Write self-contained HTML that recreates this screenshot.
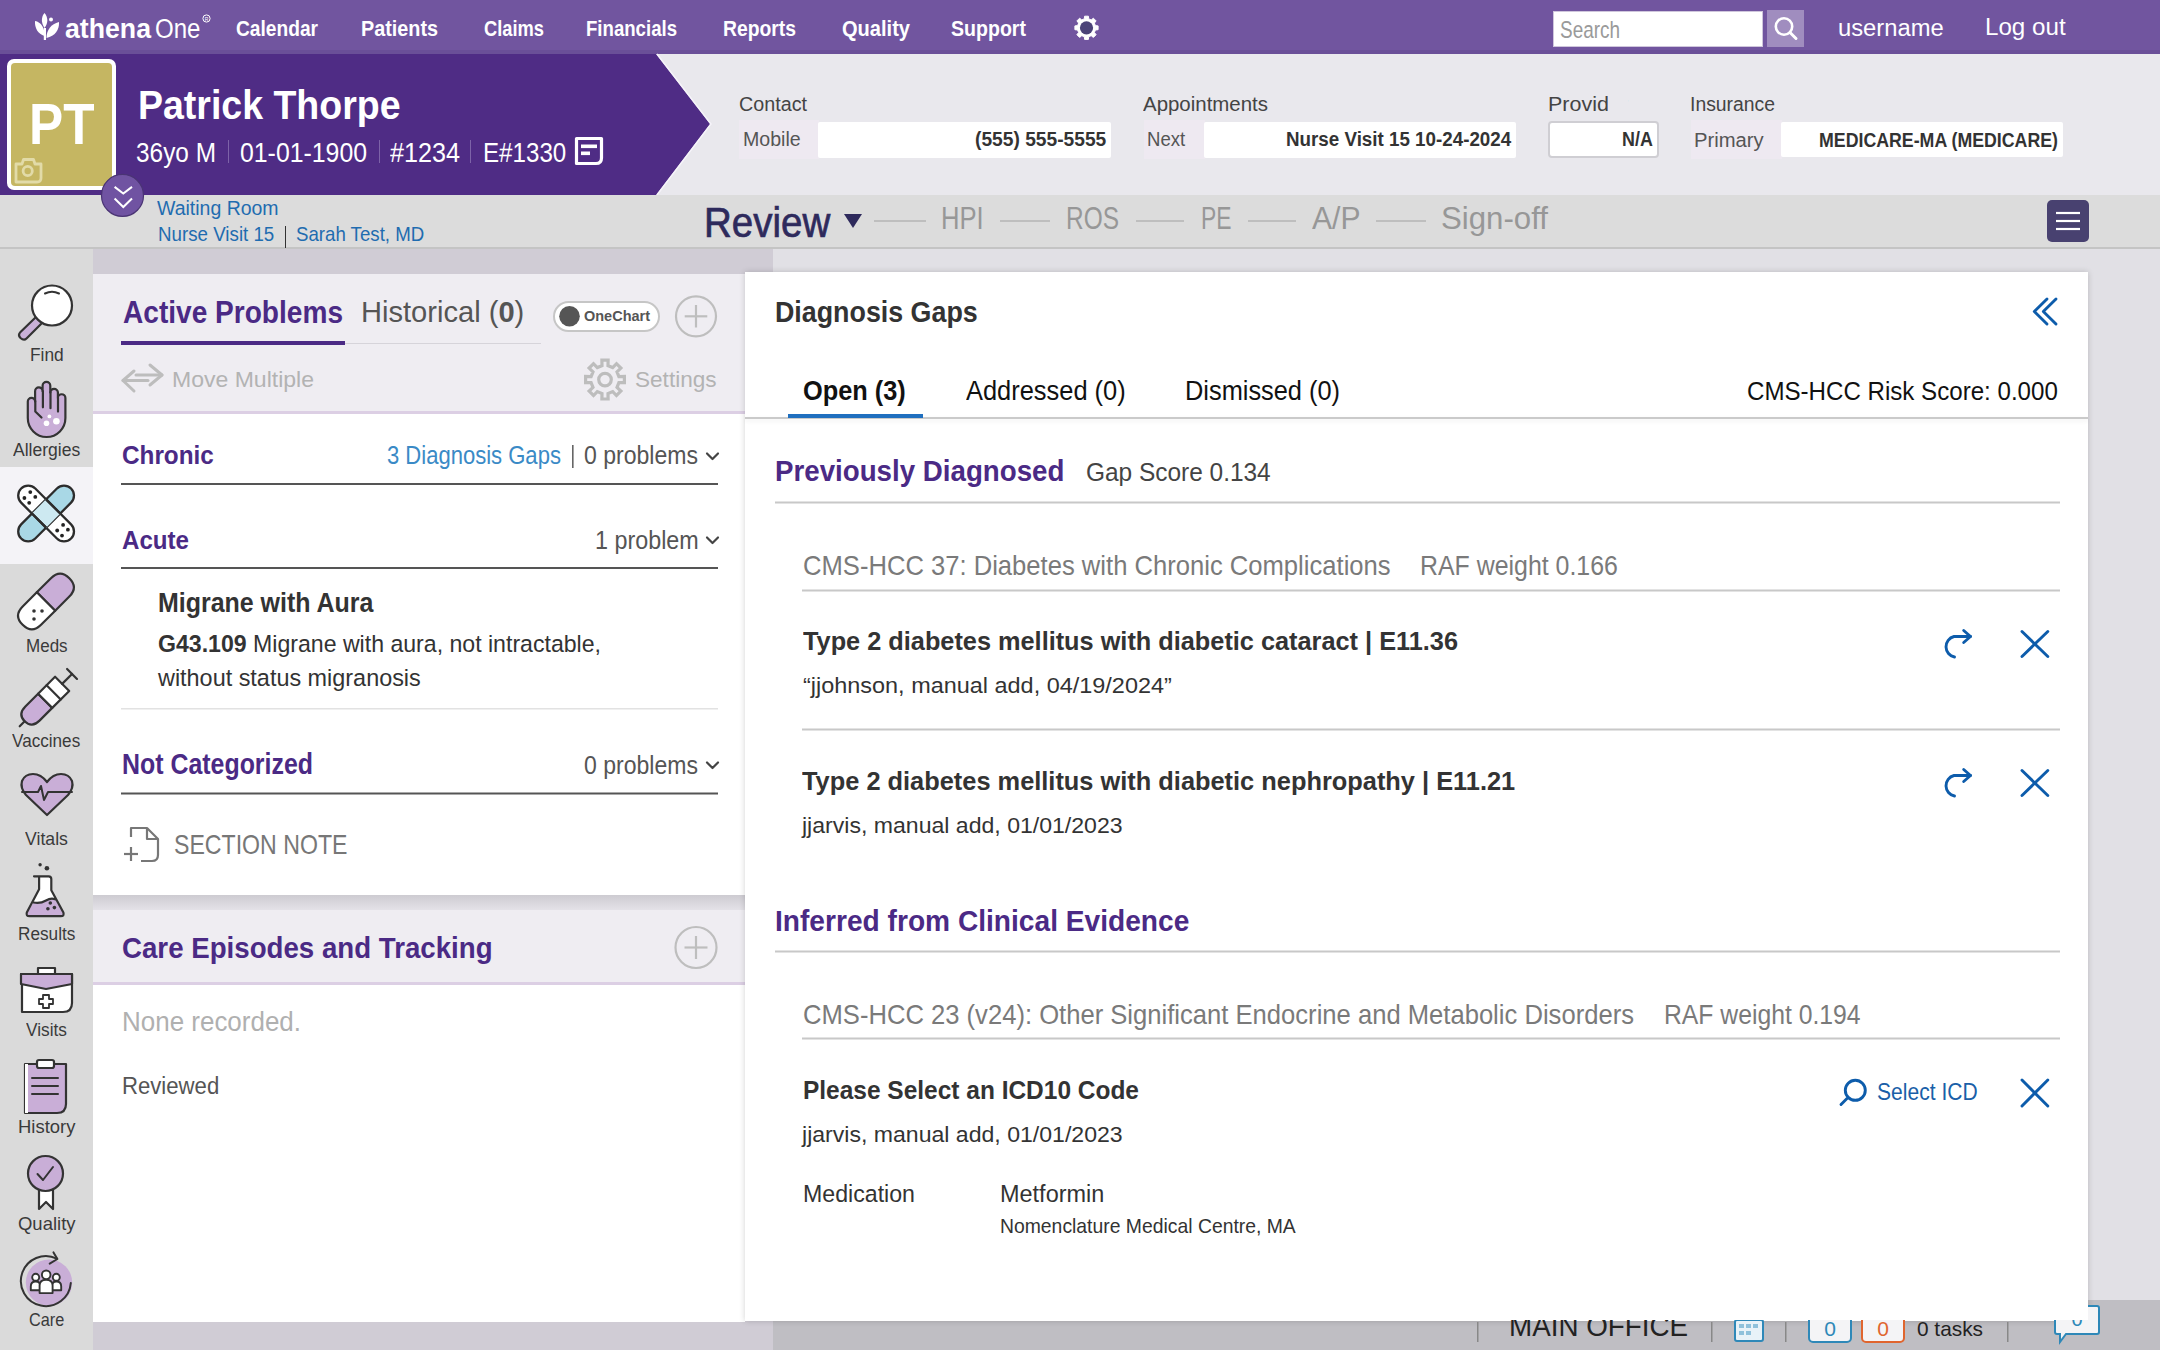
<!DOCTYPE html>
<html><head><meta charset="utf-8"><title>athenaOne</title><style>
*{margin:0;padding:0;box-sizing:border-box}
html,body{width:2160px;height:1350px;overflow:hidden;background:#E0DFE4;font-family:"Liberation Sans",sans-serif;position:relative}
.a{position:absolute}
.t{position:absolute;white-space:nowrap;line-height:1;transform-origin:0 0}
.t b{font-weight:700}
svg{position:absolute;overflow:visible}

</style></head><body>
<!-- backgrounds -->
<div class="a" style="left:0;top:0;width:2160px;height:54px;background:#71559F"></div>
<div class="a" style="left:0;top:50px;width:2160px;height:4px;background:#6A4F98"></div>
<div class="a" style="left:0;top:54px;width:2160px;height:141px;background:#E9E8ED"></div>
<svg style="left:0;top:0" width="2160" height="260"><polygon points="0,54 656,54 710,124 656,195 0,195" fill="#4F2C85"/><polyline points="657,54 711,124 657,195" fill="none" stroke="#F6F4FA" stroke-width="1.4"/></svg>
<div class="a" style="left:0;top:195px;width:2160px;height:54px;background:#DCDCDC;border-bottom:2px solid #C4C4C4"></div>
<div class="a" style="left:0;top:249px;width:93px;height:1101px;background:#DADADA"></div>
<div class="a" style="left:0;top:467px;width:93px;height:97px;background:#F4F3F7"></div>
<div class="a" style="left:93px;top:249px;width:680px;height:1101px;background:#D0CCD5"></div>
<div class="a" style="left:773px;top:249px;width:1387px;height:1051px;background:#E1E0E5"></div>
<div class="a" style="left:773px;top:1300px;width:1387px;height:50px;background:#BFBEC3"></div>

<!-- top nav extras -->
<svg style="left:0;top:0" width="260" height="54">
  <g fill="#fff">
    <path d="M44.5,13 C48,17 48.5,23 44.5,28 C41,23 41,17 44.5,13Z"/>
    <path d="M35,21 C41,22 45,28 44.5,36 C38,34 34.5,28 35,21Z"/>
    <path d="M59,22 C59.5,30 55,36 46.5,38 C46.5,30 51,24 59,22Z"/>
    <rect x="43.8" y="28" width="2.2" height="12"/>
    <circle cx="51" cy="19.5" r="2"/>
  </g>
  <circle cx="206.5" cy="18.5" r="3.6" fill="none" stroke="#fff" stroke-width="1"/>
  <text x="206.5" y="20.6" font-size="5" fill="#fff" text-anchor="middle" font-family="Liberation Sans">R</text>
</svg>
<svg style="left:1066px;top:8px" width="40" height="40">
  <path d="M18.3,10.9 L18.6,8.2 L22.4,8.2 L22.7,10.9 L25.2,11.9 L27.4,10.2 L30.1,12.9 L28.4,15.1 L29.4,17.6 L32.1,17.9 L32.1,21.7 L29.4,22.0 L28.4,24.5 L30.1,26.7 L27.4,29.4 L25.2,27.7 L22.7,28.7 L22.4,31.4 L18.6,31.4 L18.3,28.7 L15.8,27.7 L13.6,29.4 L10.9,26.7 L12.6,24.5 L11.6,22.0 L8.9,21.7 L8.9,17.9 L11.6,17.6 L12.6,15.1 L10.9,12.9 L13.6,10.2 L15.8,11.9Z" fill="#fff" stroke="#fff" stroke-width="1" stroke-linejoin="round"/>
  <circle cx="20.5" cy="19.8" r="6.6" fill="#4B4378"/>
</svg>
<div class="a" style="left:1553px;top:11px;width:210px;height:36px;background:#fff;border:1px solid #cfc6dc"></div>
<div class="a" style="left:1767px;top:10px;width:37px;height:37px;background:#A08DBF"></div>
<svg style="left:1767px;top:10px" width="37" height="37"><circle cx="17" cy="16.5" r="8.2" fill="none" stroke="#fff" stroke-width="2.6"/><line x1="23" y1="22.5" x2="29" y2="28.5" stroke="#fff" stroke-width="3" stroke-linecap="round"/></svg>

<!-- avatar -->
<div class="a" style="left:7px;top:59px;width:109px;height:131px;background:#fff;border-radius:7px"></div>
<div class="a" style="left:11px;top:63px;width:101px;height:123px;background:#C5B662;border-radius:4px"></div>
<svg style="left:0;top:150px" width="60" height="40">
  <path d="M16,14 H22 L23.5,9.5 H33.5 L35,14 H41 V28 Q41,32 37,32 H16 Z" fill="none" stroke="#E2DBA8" stroke-width="2.8" stroke-linejoin="round"/>
  <circle cx="27.7" cy="21" r="4.6" fill="none" stroke="#E2DBA8" stroke-width="2.8"/>
</svg>
<!-- banner separators and doc icon -->
<div class="a" style="left:227.5px;top:140px;width:1.5px;height:23px;background:#7D63A8"></div>
<div class="a" style="left:378.5px;top:140px;width:1.5px;height:23px;background:#7D63A8"></div>
<div class="a" style="left:469.5px;top:140px;width:1.5px;height:23px;background:#7D63A8"></div>
<svg style="left:570px;top:132px" width="40" height="40">
  <path d="M6.5,6.5 H31.5 V26 Q31.5,31.5 26,31.5 H6.5 Z" fill="none" stroke="#fff" stroke-width="3.2" stroke-linejoin="round"/>
  <rect x="11" y="12.5" width="16" height="3.6" fill="#fff"/>
  <rect x="11" y="19.5" width="9" height="3.6" fill="#fff"/>
</svg>
<!-- contact boxes -->
<div class="a" style="left:739px;top:120px;width:80px;height:39px;background:#EEE9F1"></div>
<div class="a" style="left:818px;top:122px;width:293px;height:36px;background:#fff;border-radius:2px"></div>
<div class="a" style="left:1144px;top:120px;width:61px;height:39px;background:#EEE9F1"></div>
<div class="a" style="left:1204px;top:122px;width:312px;height:36px;background:#fff;border-radius:2px"></div>
<div class="a" style="left:1548px;top:120.5px;width:111px;height:37.5px;background:#fff;border:2px solid #CFCED3;border-radius:4px"></div>
<div class="a" style="left:1691px;top:120px;width:91px;height:39px;background:#EEE9F1"></div>
<div class="a" style="left:1781px;top:122px;width:282px;height:35px;background:#fff;border-radius:2px"></div>
<!-- expand circle -->
<svg style="left:95px;top:168px" width="56" height="56">
  <circle cx="27.5" cy="27.4" r="21" fill="#7053A2" stroke="#4A3474" stroke-width="1.2"/>
  <polyline points="19.6,18.9 28.3,25.6 37,18.9" fill="none" stroke="#fff" stroke-width="2"/>
  <polyline points="19.6,30.5 28.3,39 37,30.5" fill="none" stroke="#fff" stroke-width="2"/>
</svg>
<!-- subheader -->
<div class="a" style="left:284.5px;top:226px;width:1.8px;height:22px;background:#333"></div>
<svg style="left:840px;top:205px" width="740" height="32">
  <polygon points="4,9 22,9 13,23" fill="#2E2A5C"/>
  <g stroke="#B4B4B4" stroke-width="1.6">
    <line x1="34" y1="16" x2="86" y2="16"/>
    <line x1="160" y1="16" x2="210" y2="16"/>
    <line x1="296" y1="16" x2="344" y2="16"/>
    <line x1="408" y1="16" x2="456" y2="16"/>
    <line x1="536" y1="16" x2="586" y2="16"/>
  </g>
</svg>
<div class="a" style="left:2047px;top:200px;width:42px;height:42px;background:#484170;border-radius:5px"></div>
<svg style="left:2047px;top:200px" width="42" height="42"><g stroke="#fff" stroke-width="2.2"><line x1="9" y1="13" x2="33" y2="13"/><line x1="9" y1="21" x2="33" y2="21"/><line x1="9" y1="29" x2="33" y2="29"/></g></svg>

<!-- sidebar icons -->
<svg style="left:0;top:0" width="93" height="1350">
  <g stroke="#333" stroke-width="2.2" stroke-linejoin="round" stroke-linecap="round">
    <!-- Find -->
    <path d="M20.5,332 L36,317 L42,323 L26.5,338.5 Q24,341 20.5,338 Q17.5,335 20.5,332Z" fill="#C9B0D8"/>
    <circle cx="52" cy="305.5" r="20" fill="#fff"/>
    <path d="M45,293.5 Q52,290 59,293.5" fill="none" stroke-width="2"/>
    <!-- Allergies (hand) -->
    <path d="M27.8,417 V401.6 A3.65,3.65 0 0 1 35.1,401.6 V391.2 A3.75,3.75 0 0 1 42.6,391.2 V385.8 A3.85,3.85 0 0 1 50.3,385.8 V392.6 A3.8,3.8 0 0 1 57.9,392.6 V398 A3.75,3.75 0 0 1 65.4,398 V418 A18.8,19 0 0 1 27.8,418 Z" fill="#C9AED7"/>
    <path d="M35.3,401 V411.5 L41.5,417.5 M42.9,391 V407.3 M50.5,392 V408.2 M58,398 V411.6" fill="none" stroke-width="2.2"/>
    <g fill="#fff" stroke="none"><circle cx="49.4" cy="416.4" r="1.9"/><circle cx="46.5" cy="423.2" r="2.8"/><circle cx="56.4" cy="421.2" r="3.3"/></g>
    <!-- Meds (pill) -->
    <g transform="translate(46,601.5) rotate(-45)">
      <path d="M0,-13 H20 Q33,-13 33,0 Q33,13 20,13 H0Z" fill="#C9AED7"/>
      <path d="M0,-13 H-20 Q-33,-13 -33,0 Q-33,13 -20,13 H0Z" fill="#fff"/>
    </g>
    <g fill="#333" stroke="none"><circle cx="34" cy="611" r="1.8"/><circle cx="42" cy="611" r="1.8"/><circle cx="34" cy="619" r="1.8"/></g>
    <!-- Vaccines (syringe) -->
    <g transform="translate(48,698) rotate(-45)">
      <path d="M-4,-10 H-22 Q-33,-10 -33,0 Q-33,10 -22,10 H-4Z" fill="#C9AED7"/>
      <rect x="-4" y="-10" width="24" height="20" fill="#fff"/>
      <line x1="8" y1="-10" x2="8" y2="10"/>
      <line x1="20" y1="0" x2="34" y2="0"/>
      <line x1="34" y1="-7" x2="34" y2="7"/>
      <line x1="-33" y1="0" x2="-40" y2="0"/>
    </g>
    <!-- Vitals (heart) -->
    <path d="M47,815 L26,795 Q20,788 22,781 Q25,774 33,774 Q41,774 47,782 Q53,774 61,774 Q69,774 72,781 Q74,788 68,795Z" fill="#C9AED7"/>
    <path d="M22,792 L38,792 L41,786 L44,800 L48,792 L72,792" fill="none" stroke-width="2"/>
    <!-- Results (flask) -->
    <path d="M39.1,876.3 V889.2 L26.8,912.5 Q25.8,916.2 29.5,916.2 H60.8 Q64.5,916.2 63.4,912.5 L51.3,890.3 V879 Q51.3,876.3 48.6,876.3 Z" fill="#fff" stroke="none"/>
    <path d="M33.6,902.5 Q40,904 46,900.5 Q51,897.5 55.2,899.3 L63.4,912.5 Q64.5,916.2 60.8,916.2 H29.5 Q25.8,916.2 26.8,912.5 Z" fill="#C9AED7" stroke="none"/>
    <path d="M33.6,902.5 Q40,904 46,900.5 Q51,897.5 55.2,899.3" fill="none"/>
    <path d="M34,876.3 H48.6 Q51.3,876.3 51.3,879 V890.3 L63.4,912.5 Q64.5,916.2 60.8,916.2 H29.5 Q25.8,916.2 26.8,912.5 L39.1,889.2 V876.3" fill="none"/>
    <g fill="#333" stroke="none"><circle cx="40.1" cy="864.8" r="1.7"/><circle cx="46.9" cy="868.2" r="2.3"/><circle cx="50.3" cy="903" r="1.8"/><circle cx="47.9" cy="908.7" r="1.8"/><circle cx="54.4" cy="907.6" r="1.8"/></g>
    <!-- Visits (kit) -->
    <path d="M38,974 V968 H55 V974" fill="#fff"/>
    <path d="M21,974 H72 V1003 Q72,1012 63,1012 H22 V974Z" fill="#fff"/>
    <path d="M21,974 H72 V984 L46,989 L21,984Z" fill="#C9AED7"/>
    <path d="M43,995 H49 V999 H53 V1004 H49 V1008 H43 V1004 H39 V999 H43Z" fill="#fff" stroke-width="1.8"/>
    <!-- History (clipboard) -->
    <path d="M25,1064 H66 V1104 Q66,1113 57,1113 H25Z" fill="#C9AED7"/>
    <path d="M25,1064 H28 V1113 H25Z" fill="#fff" stroke="none"/>
    <rect x="37" y="1060" width="17" height="8" rx="2" fill="#fff"/>
    <g stroke-width="2"><line x1="32" y1="1078" x2="58" y2="1078"/><line x1="32" y1="1086" x2="58" y2="1086"/><line x1="32" y1="1094" x2="58" y2="1094"/></g>
    <!-- Quality (medal) -->
    <path d="M39,1188 V1209 L46,1202 L53,1209 V1188" fill="#fff"/>
    <circle cx="45.5" cy="1173.5" r="17.5" fill="#C9AED7"/>
    <path d="M37.5,1174 L43,1180 L53,1167" fill="none" stroke-width="2"/>
    <!-- Care -->
    <circle cx="49" cy="1282.6" r="23.2" fill="#C9AED7" stroke="none"/>
    <path d="M70.8,1283 A25,25 0 1 1 56.8,1258.6" fill="none" stroke-width="2"/>
    <path d="M53.5,1252.4 L57.4,1259 L49.7,1263.6" fill="none" stroke-width="2"/>
    <g fill="#fff" stroke-width="1.9">
      <path d="M30.8,1290.3 V1286.5 Q30.8,1281.5 35.7,1281.5 Q40.6,1281.5 40.6,1286.5 V1290.3Z"/><circle cx="35.7" cy="1277.3" r="3.5"/>
      <path d="M51.8,1290.3 V1286.5 Q51.8,1281.5 56.4,1281.5 Q61.2,1281.5 61.2,1286.5 V1290.3Z"/><circle cx="56.3" cy="1277.3" r="3.5"/>
      <path d="M39.6,1293.1 V1285.5 Q39.6,1279.7 46.1,1279.7 Q52.6,1279.7 52.6,1285.5 V1293.1Z"/><circle cx="46.2" cy="1274.8" r="4.3"/>
    </g>
  </g>
  <!-- Bandage active -->
  <g stroke="#2c2c2c" stroke-width="2.3" stroke-linejoin="round">
    <g transform="translate(46.1,513.5) rotate(45)">
      <rect x="-35.3" y="-10" width="70.6" height="20" rx="10" fill="#fff"/>
    </g>
    <g transform="translate(46.1,513.5) rotate(-45)">
      <rect x="-35.3" y="-10" width="70.6" height="20" rx="10" fill="#A9D8E6"/>
      <rect x="-10" y="-10" width="20" height="20" fill="#CDE9F1" stroke="none"/>
      <path d="M-10,-10 V10 M10,-10 V10" fill="none"/>
    </g>
    <g transform="translate(46.1,513.5) rotate(45)">
      <path d="M-10,-10 H10 M-10,10 H10" fill="none"/>
    </g>
    <g fill="#222" stroke="none">
      <circle cx="30.3" cy="492.1" r="1.9"/><circle cx="24.4" cy="498" r="1.9"/><circle cx="35.3" cy="496.9" r="1.9"/><circle cx="29.2" cy="502.8" r="1.9"/>
      <circle cx="63.1" cy="524.9" r="1.9"/><circle cx="57.2" cy="530.5" r="1.9"/><circle cx="67.9" cy="529.7" r="1.9"/><circle cx="62" cy="535.6" r="1.9"/>
    </g>
  </g>
</svg>

<!-- left card -->
<div class="a" style="left:93px;top:274px;width:652px;height:621px;background:#fff"></div>
<div class="a" style="left:93px;top:274px;width:652px;height:140px;background:#EFEDF2;border-bottom:3px solid #DCCFE4"></div>
<div class="a" style="left:121px;top:340.5px;width:224px;height:4px;background:#4B2A85"></div>
<div class="a" style="left:345px;top:342.5px;width:196px;height:1.5px;background:#D6D4DA"></div>
<div class="a" style="left:553px;top:301px;width:107px;height:31px;background:#fff;border:2px solid #C6C6C6;border-radius:16px"></div>
<svg style="left:93px;top:274px" width="652" height="621">
  <circle cx="476.5" cy="42.3" r="10.3" fill="#555"/>
  <g fill="none" stroke="#BEBEBE" stroke-width="2.2">
    <circle cx="603" cy="42.3" r="20"/>
    <line x1="603" y1="31" x2="603" y2="53.5"/><line x1="591.7" y1="42.3" x2="614.3" y2="42.3"/>
  </g>
  <!-- move multiple -->
  <g fill="none" stroke="#BDBDBD" stroke-width="3" stroke-linejoin="round" stroke-linecap="round">
    <polyline points="41,97 30,106.5 41,117"/>
    <line x1="30" y1="106.5" x2="55" y2="106.5"/>
    <polyline points="57,91 69,101 57,111"/>
    <line x1="43" y1="101" x2="69" y2="101"/>
  </g>
  <!-- settings gear -->
  <g fill="none" stroke="#BDBDBD" stroke-width="3.2" stroke-linejoin="miter">
    <path d="M509.0,91.7 L508.9,86.2 L515.1,86.2 L515.0,91.7 L519.7,93.6 L523.5,89.7 L527.9,94.1 L524.0,97.9 L525.9,102.6 L531.4,102.5 L531.4,108.7 L525.9,108.6 L524.0,113.3 L527.9,117.1 L523.5,121.5 L519.7,117.6 L515.0,119.5 L515.1,125.0 L508.9,125.0 L509.0,119.5 L504.3,117.6 L500.5,121.5 L496.1,117.1 L500.0,113.3 L498.1,108.6 L492.6,108.7 L492.6,102.5 L498.1,102.6 L500.0,97.9 L496.1,94.1 L500.5,89.7 L504.3,93.6Z"/>
    <circle cx="512" cy="105.6" r="6.3"/>
  </g>
  <!-- section rows -->
  <rect x="28" y="209" width="597" height="2" fill="#555"/>
  <rect x="28" y="293" width="597" height="2" fill="#555"/>
  <rect x="28" y="434" width="597" height="1.5" fill="#E2E2E2"/>
  <rect x="28" y="518.5" width="597" height="2" fill="#555"/>
  <rect x="479" y="171" width="1.6" height="23" fill="#666"/>
  <g fill="none" stroke="#444" stroke-width="2.2" stroke-linecap="round" stroke-linejoin="round">
    <polyline points="614,179.5 619.5,185 625,179.5"/>
    <polyline points="614,263.5 619.5,269 625,263.5"/>
    <polyline points="614,488.5 619.5,494 625,488.5"/>
  </g>
  <!-- section note icon -->
  <g fill="none" stroke="#777" stroke-width="2.2" stroke-linejoin="round">
    <path d="M38,563 V554 H54 L65,565 V581 Q65,587 59,587 H48"/>
    <path d="M54,554 V565 H65"/>
    <line x1="38" y1="573" x2="38" y2="587"/><line x1="31" y1="580" x2="45" y2="580"/>
  </g>
</svg>
<div class="a" style="left:93px;top:895px;width:652px;height:15px;background:linear-gradient(#CDCBD1,#E4E2E8)"></div>
<div class="a" style="left:93px;top:910px;width:652px;height:412px;background:#fff"></div>
<div class="a" style="left:93px;top:910px;width:652px;height:75px;background:#EFEDF2;border-bottom:3px solid #DCCFE4"></div>
<svg style="left:660px;top:912px" width="72" height="72">
  <g fill="none" stroke="#BEBEBE" stroke-width="2.2">
    <circle cx="36" cy="35.5" r="20.5"/>
    <line x1="36" y1="24" x2="36" y2="47"/><line x1="24.5" y1="35.5" x2="47.5" y2="35.5"/>
  </g>
</svg>

<!-- right card -->
<div class="a" style="left:745px;top:272px;width:1343px;height:1049px;background:#fff;box-shadow:0 0 6px rgba(0,0,0,0.18)"></div>
<div class="a" style="left:745px;top:416.5px;width:1343px;height:2px;background:#CACACA;box-shadow:0 2px 4px rgba(0,0,0,0.08)"></div>
<div class="a" style="left:788px;top:413.5px;width:135px;height:4px;background:#1F6FBF"></div>
<svg style="left:745px;top:272px" width="1343" height="1048">
  <g fill="#C8C8C8">
    <rect x="30" y="229.5" width="1285" height="2"/>
    <rect x="57" y="317.5" width="1258" height="2"/>
    <rect x="57" y="456.5" width="1258" height="2"/>
    <rect x="30" y="678.5" width="1285" height="2"/>
    <rect x="57" y="765.5" width="1258" height="2"/>
  </g>
  <g fill="none" stroke="#0D5CAB" stroke-width="2.9" stroke-linecap="round" stroke-linejoin="round">
    <polyline points="1302,27 1289.3,39.5 1302,52"/>
    <polyline points="1311,27 1298.3,39.5 1311,52"/>
    <!-- redo 1 -->
    <path d="M1209.5,385 A10.5,10.5 0 0 1 1209,364.5 H1225.5"/>
    <polyline points="1218.7,358.5 1225.5,364.5 1218.7,370.5"/>
    <line x1="1277" y1="359.5" x2="1302.8" y2="384.5"/><line x1="1302.8" y1="359.5" x2="1277" y2="384.5"/>
    <!-- redo 2 -->
    <path d="M1209.5,524 A10.5,10.5 0 0 1 1209,503.5 H1225.5"/>
    <polyline points="1218.7,497.5 1225.5,503.5 1218.7,509.5"/>
    <line x1="1277" y1="498.5" x2="1302.8" y2="523.5"/><line x1="1302.8" y1="498.5" x2="1277" y2="523.5"/>
    <!-- select icd -->
    <circle cx="1110.3" cy="818.3" r="10"/>
    <line x1="1102" y1="826.5" x2="1096" y2="832.5"/>
    <line x1="1277" y1="808" x2="1302.8" y2="834"/><line x1="1302.8" y1="808" x2="1277" y2="834"/>
  </g>
</svg>
<!-- status bar -->
<svg style="left:1460px;top:1296px" width="700" height="54">
  <g fill="#888"><rect x="17" y="26" width="1.5" height="20"/><rect x="251" y="26" width="1.5" height="20"/><rect x="325" y="26" width="1.5" height="20"/><rect x="547" y="26" width="1.5" height="20"/></g>
  <text x="49" y="40" font-family="Liberation Sans" font-size="29" fill="#222" textLength="179" lengthAdjust="spacingAndGlyphs">MAIN OFFICE</text>
  <rect x="275" y="24" width="28" height="21" rx="2" fill="#E8F2F8" stroke="#2E88B8" stroke-width="2"/>
  <rect x="279" y="28" width="5" height="4" fill="#8FC1DB"/><rect x="286" y="28" width="5" height="4" fill="#8FC1DB"/><rect x="293" y="28" width="5" height="4" fill="#8FC1DB"/>
  <rect x="279" y="35" width="5" height="4" fill="#8FC1DB"/><rect x="286" y="35" width="5" height="4" fill="#8FC1DB"/>
  <rect x="349" y="14" width="42" height="32" rx="4" fill="#F4F4F6" stroke="#2E88B8" stroke-width="2"/>
  <rect x="402" y="14" width="42" height="32" rx="4" fill="#F4F4F6" stroke="#E0652E" stroke-width="2"/>
  <text x="370" y="40" font-family="Liberation Sans" font-size="21" fill="#2E88B8" text-anchor="middle">0</text>
  <text x="423" y="40" font-family="Liberation Sans" font-size="21" fill="#E0652E" text-anchor="middle">0</text>
  <text x="457" y="40" font-family="Liberation Sans" font-size="21" fill="#222" textLength="66" lengthAdjust="spacingAndGlyphs">0 tasks</text>
  <path d="M597,10 H637 Q639,10 639,12 V36 Q639,38 637,38 H606 L600,46 V38 H597 Q595,38 595,36 V12 Q595,10 597,10Z" fill="#F4F4F6" stroke="#2E88B8" stroke-width="2"/>
  <text x="617" y="30" font-family="Liberation Sans" font-size="20" fill="#2E88B8" text-anchor="middle">0</text>
</svg>
<!-- card covers top of status bar -->
<div class="a" style="left:745px;top:1290px;width:1343px;height:30px;background:#fff"></div>

<div id="txt">
<div class="t" style="left:236.0px;top:17.5px;font-size:21.80px;font-weight:700;color:#fff;transform:scaleX(0.8791);">Calendar</div>
<div class="t" style="left:361.0px;top:17.5px;font-size:21.80px;font-weight:700;color:#fff;transform:scaleX(0.9081);">Patients</div>
<div class="t" style="left:484.0px;top:17.5px;font-size:21.80px;font-weight:700;color:#fff;transform:scaleX(0.8393);">Claims</div>
<div class="t" style="left:586.0px;top:17.5px;font-size:21.80px;font-weight:700;color:#fff;transform:scaleX(0.8536);">Financials</div>
<div class="t" style="left:723.0px;top:17.5px;font-size:21.80px;font-weight:700;color:#fff;transform:scaleX(0.8864);">Reports</div>
<div class="t" style="left:842.0px;top:17.5px;font-size:21.80px;font-weight:700;color:#fff;transform:scaleX(0.9203);">Quality</div>
<div class="t" style="left:951.0px;top:17.5px;font-size:21.80px;font-weight:700;color:#fff;transform:scaleX(0.8977);">Support</div>
<div class="t" style="left:65.0px;top:14.9px;font-size:27.62px;font-weight:700;color:#fff;transform:scaleX(0.9663);">athena</div>
<div class="t" style="left:154.5px;top:14.4px;font-size:28.20px;font-weight:400;color:#fff;transform:scaleX(0.8540);">One</div>
<div class="t" style="left:1560.0px;top:19.2px;font-size:23.26px;font-weight:400;color:#9a9a9a;transform:scaleX(0.8144);">Search</div>
<div class="t" style="left:1838.0px;top:16.0px;font-size:23.98px;font-weight:400;color:#fff;transform:scaleX(0.9916);">username</div>
<div class="t" style="left:1985.4px;top:15.4px;font-size:24.71px;font-weight:400;color:#fff;transform:scaleX(0.9779);">Log out</div>
<div class="t" style="left:29.0px;top:95.9px;font-size:57.41px;font-weight:700;color:#fff;transform:scaleX(0.8929);">PT</div>
<div class="t" style="left:138.0px;top:84.2px;font-size:41.43px;font-weight:700;color:#fff;transform:scaleX(0.9050);">Patrick Thorpe</div>
<div class="t" style="left:136.0px;top:138.7px;font-size:27.18px;font-weight:400;color:#fff;transform:scaleX(0.8978);">36yo M</div>
<div class="t" style="left:240.1px;top:138.7px;font-size:27.18px;font-weight:400;color:#fff;transform:scaleX(0.9137);">01-01-1900</div>
<div class="t" style="left:390.0px;top:138.7px;font-size:27.18px;font-weight:400;color:#fff;transform:scaleX(0.9264);">#1234</div>
<div class="t" style="left:482.7px;top:138.7px;font-size:27.18px;font-weight:400;color:#fff;transform:scaleX(0.8891);">E#1330</div>
<div class="t" style="left:739.0px;top:93.9px;font-size:20.35px;font-weight:400;color:#444;transform:scaleX(0.9697);">Contact</div>
<div class="t" style="left:743.0px;top:130.3px;font-size:19.77px;font-weight:400;color:#555;transform:scaleX(0.9908);">Mobile</div>
<div class="t" style="left:974.7px;top:130.3px;font-size:19.77px;font-weight:700;color:#333;transform:scaleX(0.9714);">(555) 555-5555</div>
<div class="t" style="left:1143.2px;top:93.8px;font-size:20.35px;font-weight:400;color:#444;transform:scaleX(1.0048);">Appointments</div>
<div class="t" style="left:1147.3px;top:130.3px;font-size:19.77px;font-weight:400;color:#555;transform:scaleX(0.9396);">Next</div>
<div class="t" style="left:1286.0px;top:130.3px;font-size:19.77px;font-weight:700;color:#333;transform:scaleX(0.9503);">Nurse Visit 15 10-24-2024</div>
<div class="t" style="left:1690.4px;top:93.6px;font-size:20.35px;font-weight:400;color:#444;transform:scaleX(0.9514);">Insurance</div>
<div class="t" style="left:1693.8px;top:130.5px;font-size:19.77px;font-weight:400;color:#555;transform:scaleX(1.0236);">Primary</div>
<div class="t" style="left:1818.6px;top:130.5px;font-size:19.77px;font-weight:700;color:#333;transform:scaleX(0.8982);">MEDICARE-MA (MEDICARE)</div>
<div class="t" style="left:1622.0px;top:130.3px;font-size:19.77px;font-weight:700;color:#333;transform:scaleX(0.9046);">N/A</div>
<div class="t" style="left:1548.4px;top:93.8px;font-size:20.35px;font-weight:400;color:#444;transform:scaleX(1.0559);">Provider</div>
<div class="t" style="left:156.8px;top:198.7px;font-size:19.91px;font-weight:400;color:#1F6CB0;transform:scaleX(0.9784);">Waiting Room</div>
<div class="t" style="left:157.7px;top:225.2px;font-size:19.48px;font-weight:400;color:#1F6CB0;transform:scaleX(0.9624);">Nurse Visit 15</div>
<div class="t" style="left:295.5px;top:225.2px;font-size:19.48px;font-weight:400;color:#1F6CB0;transform:scaleX(0.9581);">Sarah Test, MD</div>
<div class="t" style="left:704.3px;top:201.6px;font-size:42.15px;font-weight:400;color:#2E2A5C;transform:scaleX(0.9141);-webkit-text-stroke:0.7px #2E2A5C;">Review</div>
<div class="t" style="left:940.6px;top:203.3px;font-size:31.54px;font-weight:400;color:#979797;transform:scaleX(0.8124);">HPI</div>
<div class="t" style="left:1065.8px;top:203.3px;font-size:31.54px;font-weight:400;color:#979797;transform:scaleX(0.7757);">ROS</div>
<div class="t" style="left:1200.5px;top:203.3px;font-size:31.54px;font-weight:400;color:#979797;transform:scaleX(0.7251);">PE</div>
<div class="t" style="left:1311.9px;top:203.3px;font-size:31.54px;font-weight:400;color:#979797;transform:scaleX(0.9542);">A/P</div>
<div class="t" style="left:1440.8px;top:203.3px;font-size:31.54px;font-weight:400;color:#979797;transform:scaleX(0.9897);">Sign-off</div>
<div class="t" style="left:29.6px;top:345.8px;font-size:18.02px;font-weight:400;color:#3a3a3a;transform:scaleX(0.9616);">Find</div>
<div class="t" style="left:12.7px;top:441.4px;font-size:18.02px;font-weight:400;color:#3a3a3a;transform:scaleX(0.9740);">Allergies</div>
<div class="t" style="left:26.2px;top:636.5px;font-size:18.02px;font-weight:400;color:#3a3a3a;transform:scaleX(0.9441);">Meds</div>
<div class="t" style="left:12.2px;top:732.0px;font-size:18.02px;font-weight:400;color:#3a3a3a;transform:scaleX(0.9503);">Vaccines</div>
<div class="t" style="left:24.9px;top:830.3px;font-size:18.02px;font-weight:400;color:#3a3a3a;transform:scaleX(0.9809);">Vitals</div>
<div class="t" style="left:18.2px;top:924.7px;font-size:18.02px;font-weight:400;color:#3a3a3a;transform:scaleX(0.9554);">Results</div>
<div class="t" style="left:26.2px;top:1021.4px;font-size:18.02px;font-weight:400;color:#3a3a3a;transform:scaleX(0.9574);">Visits</div>
<div class="t" style="left:18.2px;top:1118.0px;font-size:18.02px;font-weight:400;color:#3a3a3a;transform:scaleX(1.0239);">History</div>
<div class="t" style="left:17.9px;top:1214.9px;font-size:18.02px;font-weight:400;color:#3a3a3a;transform:scaleX(1.0254);">Quality</div>
<div class="t" style="left:28.8px;top:1311.3px;font-size:18.02px;font-weight:400;color:#3a3a3a;transform:scaleX(0.9037);">Care</div>
<div class="t" style="left:123.0px;top:297.2px;font-size:31.25px;font-weight:700;color:#4B2A85;transform:scaleX(0.8984);">Active Problems</div>
<div class="t" style="left:361.4px;top:297.3px;font-size:29.80px;font-weight:400;color:#555;transform:scaleX(0.9764);">Historical (<b>0</b>)</div>
<div class="t" style="left:584.0px;top:308.3px;font-size:15.55px;font-weight:700;color:#555;transform:scaleX(0.9316);">OneChart</div>
<div class="t" style="left:171.9px;top:369.0px;font-size:22.53px;font-weight:400;color:#b3b3b3;transform:scaleX(1.0223);">Move Multiple</div>
<div class="t" style="left:634.6px;top:368.4px;font-size:22.67px;font-weight:400;color:#b3b3b3;transform:scaleX(0.9966);">Settings</div>
<div class="t" style="left:122.2px;top:441.9px;font-size:26.60px;font-weight:700;color:#4B2A85;transform:scaleX(0.9137);">Chronic</div>
<div class="t" style="left:387.4px;top:442.3px;font-size:26.16px;font-weight:400;color:#3A8AC6;transform:scaleX(0.8423);">3 Diagnosis Gaps</div>
<div class="t" style="left:584.4px;top:442.3px;font-size:26.16px;font-weight:400;color:#555;transform:scaleX(0.8811);">0 problems</div>
<div class="t" style="left:122.0px;top:526.8px;font-size:26.16px;font-weight:700;color:#4B2A85;transform:scaleX(0.9220);">Acute</div>
<div class="t" style="left:594.8px;top:526.8px;font-size:26.16px;font-weight:400;color:#555;transform:scaleX(0.8916);">1 problem</div>
<div class="t" style="left:157.8px;top:589.0px;font-size:27.18px;font-weight:700;color:#333;transform:scaleX(0.9185);">Migrane with Aura</div>
<div class="t" style="left:157.8px;top:632.5px;font-size:23.69px;font-weight:400;color:#333;transform:scaleX(0.9751);"><b>G43.109</b> Migrane with aura, not intractable,</div>
<div class="t" style="left:157.8px;top:666.6px;font-size:23.69px;font-weight:400;color:#333;transform:scaleX(0.9881);">without status migranosis</div>
<div class="t" style="left:122.0px;top:749.8px;font-size:28.92px;font-weight:700;color:#4B2A85;transform:scaleX(0.8618);">Not Categorized</div>
<div class="t" style="left:584.3px;top:752.2px;font-size:26.16px;font-weight:400;color:#555;transform:scaleX(0.8803);">0 problems</div>
<div class="t" style="left:174.0px;top:831.0px;font-size:28.05px;font-weight:400;color:#777;transform:scaleX(0.8247);">SECTION NOTE</div>
<div class="t" style="left:122.0px;top:933.0px;font-size:30.09px;font-weight:700;color:#4B2A85;transform:scaleX(0.9199);">Care Episodes and Tracking</div>
<div class="t" style="left:122.0px;top:1009.3px;font-size:26.74px;font-weight:400;color:#b0b0b0;transform:scaleX(0.9713);">None recorded.</div>
<div class="t" style="left:122.0px;top:1074.4px;font-size:24.42px;font-weight:400;color:#555;transform:scaleX(0.9070);">Reviewed</div>
<div class="t" style="left:775.3px;top:297.4px;font-size:30.23px;font-weight:700;color:#333;transform:scaleX(0.8875);">Diagnosis Gaps</div>
<div class="t" style="left:803.0px;top:377.9px;font-size:27.04px;font-weight:700;color:#111;transform:scaleX(0.9376);">Open (3)</div>
<div class="t" style="left:965.6px;top:377.9px;font-size:27.04px;font-weight:400;color:#111;transform:scaleX(0.9406);">Addressed (0)</div>
<div class="t" style="left:1185.0px;top:377.9px;font-size:27.04px;font-weight:400;color:#111;transform:scaleX(0.9382);">Dismissed (0)</div>
<div class="t" style="left:1746.6px;top:378.3px;font-size:26.45px;font-weight:400;color:#111;transform:scaleX(0.9119);">CMS-HCC Risk Score: 0.000</div>
<div class="t" style="left:775.3px;top:457.0px;font-size:28.78px;font-weight:700;color:#4B2A85;transform:scaleX(0.9629);">Previously Diagnosed</div>
<div class="t" style="left:1086.4px;top:460.2px;font-size:25.00px;font-weight:400;color:#444;transform:scaleX(0.9772);">Gap Score 0.134</div>
<div class="t" style="left:802.8px;top:552.9px;font-size:27.04px;font-weight:400;color:#7a7a7a;transform:scaleX(0.9471);">CMS-HCC 37: Diabetes with Chronic Complications</div>
<div class="t" style="left:1419.6px;top:552.9px;font-size:27.04px;font-weight:400;color:#7a7a7a;transform:scaleX(0.9210);">RAF weight 0.166</div>
<div class="t" style="left:803.2px;top:629.2px;font-size:25.87px;font-weight:700;color:#333;transform:scaleX(0.9786);">Type 2 diabetes mellitus with diabetic cataract | E11.36</div>
<div class="t" style="left:802.9px;top:673.6px;font-size:22.67px;font-weight:400;color:#333;transform:scaleX(1.0346);">&#8220;jjohnson, manual add, 04/19/2024&#8221;</div>
<div class="t" style="left:802.0px;top:768.5px;font-size:25.87px;font-weight:700;color:#333;transform:scaleX(0.9814);">Type 2 diabetes mellitus with diabetic nephropathy | E11.21</div>
<div class="t" style="left:802.0px;top:813.8px;font-size:22.67px;font-weight:400;color:#333;transform:scaleX(1.0181);">jjarvis, manual add, 01/01/2023</div>
<div class="t" style="left:775.0px;top:906.7px;font-size:28.78px;font-weight:700;color:#4B2A85;transform:scaleX(0.9780);">Inferred from Clinical Evidence</div>
<div class="t" style="left:802.9px;top:1001.9px;font-size:27.04px;font-weight:400;color:#7a7a7a;transform:scaleX(0.9471);">CMS-HCC 23 (v24): Other Significant Endocrine and Metabolic Disorders</div>
<div class="t" style="left:1664.4px;top:1001.9px;font-size:27.04px;font-weight:400;color:#7a7a7a;transform:scaleX(0.9150);">RAF weight 0.194</div>
<div class="t" style="left:803.0px;top:1078.3px;font-size:25.87px;font-weight:700;color:#333;transform:scaleX(0.9464);">Please Select an ICD10 Code</div>
<div class="t" style="left:802.0px;top:1122.8px;font-size:22.67px;font-weight:400;color:#333;transform:scaleX(1.0184);">jjarvis, manual add, 01/01/2023</div>
<div class="t" style="left:803.0px;top:1182.6px;font-size:23.55px;font-weight:400;color:#333;transform:scaleX(0.9835);">Medication</div>
<div class="t" style="left:1000.0px;top:1182.6px;font-size:23.55px;font-weight:400;color:#333;transform:scaleX(0.9963);">Metformin</div>
<div class="t" style="left:1000.0px;top:1216.1px;font-size:20.64px;font-weight:400;color:#333;transform:scaleX(0.9383);">Nomenclature Medical Centre, MA</div>
<div class="t" style="left:1876.7px;top:1081.4px;font-size:23.26px;font-weight:400;color:#1A5FA8;transform:scaleX(0.9062);">Select ICD</div>
</div>
<div class="a" style="left:1607.5px;top:92px;width:20px;height:24px;background:#E9E8ED"></div>

</body></html>
